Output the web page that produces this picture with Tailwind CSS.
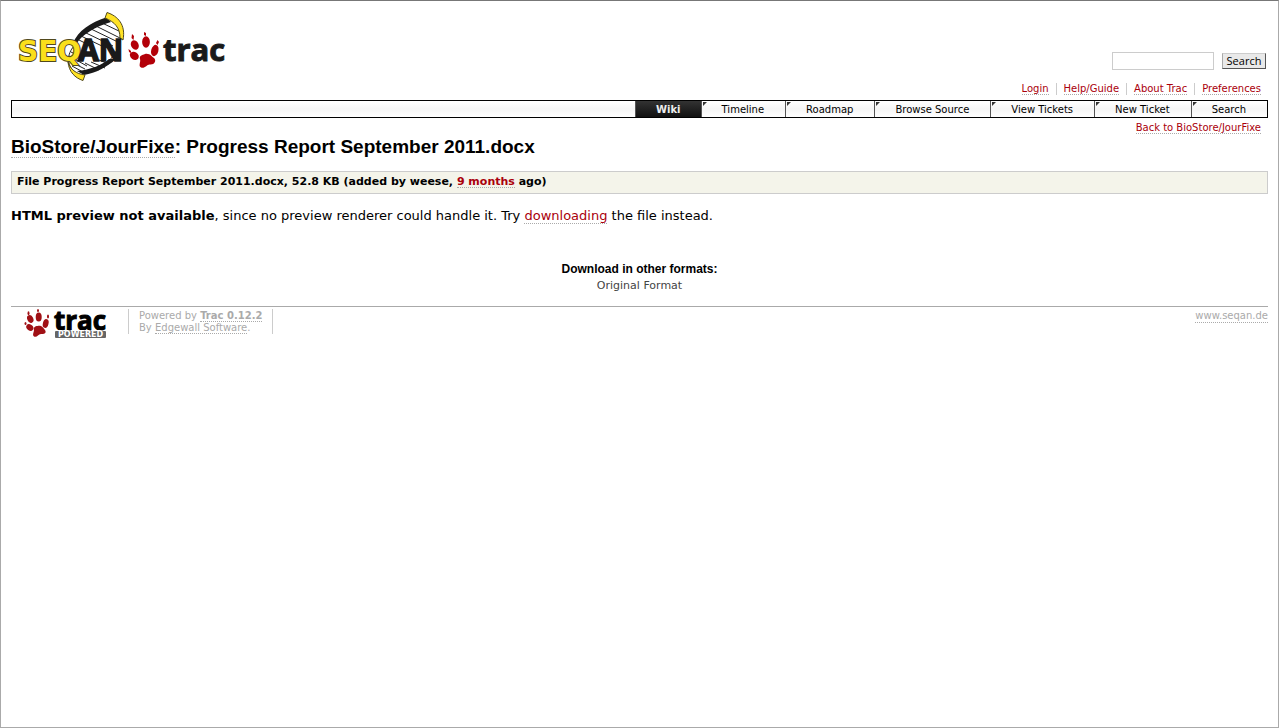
<!DOCTYPE html>
<html lang="en">
<head>
<meta charset="utf-8">
<title>Progress Report September 2011.docx on BioStore/JourFixe – SeqAn</title>
<script src="https://cdn.jsdelivr.net/npm/@tailwindcss/browser@4"></script>
</head>
<body class="flex min-h-screen flex-col border-t border-l border-r border-b border-t-[#777] border-x-[#aaa] border-b-[#aaa] bg-white px-[10px] font-['Verdana','DejaVu_Sans',sans-serif] text-[13px] text-black">
<header>
  <div class="flex h-[69px] items-end justify-between">
    <a href="#" aria-label="SeqAn trac" class="self-start pt-[9px]">
      <svg class="block overflow-visible" width="218" height="76" viewBox="10 10 218 76">
        <path d="M105 18C92 23 78 32 74 44C70 55 69 68 77 75C98 73 118 62 122 41C122 30 116 22 105 18Z" fill="#fff"/>
        <path d="M99 22L120 32M93 25L121 39M88 28L119 43M83 32L112 46M80 36L101 46M78 40L92 47M70 52L78 56M68 56L86 66M68 61L84 69M71 66L82 72M98 60L108 64M90 62L104 68M84 63L98 70" stroke="#222" stroke-width="1" fill="none"/>
        <path d="M73 46C66 54 65 65 74 72M119 30C122 42 115 53 108 61" stroke="#222" stroke-width="1" fill="none"/>
        <path d="M105 17.500C90 22 77 31 72 43L76 43C81 35 93 27 110 22ZM76 71C89 70 101 65 108 59L115 59C106 67 95 73 83 75Z" fill="#1a1a1a"/>
        <path d="M106 12.500C117 16 125 25 122 40L119 38C119 28 114 22 104 18ZM67 62C69 69 75 74 84 75L82 80.500C74 78 68 72 67 62Z" fill="#ffe224" stroke="#51491c" stroke-width="1"/>
        <text x="17" y="61" font-family="DejaVu Sans, sans-serif" font-weight="bold" font-size="28" fill="#fadf1c" stroke="#51491c" stroke-width="2" paint-order="stroke">SEQ</text>
        <text x="77" y="61" font-family="Open Sans, sans-serif" font-weight="bold" font-size="30" fill="#1a1a1a" stroke="#1a1a1a" stroke-width="1.500">AN</text>
        <g fill="#b30008">
          <path d="M144 54C149 53 151 57 153 58C156 61 153 65 149 64.500C146 64 144 69 140 67.500C137 66 140 62 139 59C138 56 141 55 144 54Z"/>
          <ellipse cx="133.800" cy="45" rx="3.800" ry="5" transform="rotate(-25 133.800 45)"/>
          <ellipse cx="145" cy="42" rx="3.900" ry="5.800"/>
          <ellipse cx="153.800" cy="50.500" rx="3.600" ry="5.800" transform="rotate(15 153.800 50.500)"/>
          <ellipse cx="133.300" cy="55.800" rx="4.800" ry="3.800" transform="rotate(35 133.300 55.800)"/>
          <path d="M131 34L133 36L132.500 40L130.500 38ZM143 32L145 33L145 36L143 35ZM156.500 40L158 42L156.500 45L155 43ZM127.500 49L130 51L130 53L128 52Z"/>
        </g>
        <text x="162" y="61" font-family="Open Sans, sans-serif" font-weight="bold" font-size="31" fill="#1a1a1a" stroke="#1a1a1a" stroke-width="1">trac</text>
      </svg>
    </a>
    <form class="mr-[2px] flex items-center gap-2 font-['Lucida_Grande','Open_Sans',sans-serif] text-[11px]" onsubmit="return false">
      <input type="text" aria-label="Search" class="h-[18px] w-[102px] border border-[#ccc] bg-white px-1 outline-none">
      <button class="h-4 w-11 border border-t-[#ccc] border-r-[#555] border-b-[#555] border-l-[#aaa] bg-[#e9e9e9] leading-[14px]">Search</button>
    </form>
  </div>
  <nav class="mt-[13px] flex h-[17px] justify-end text-[10px] leading-[12px] text-[#aa000c]" aria-label="Account">
    <div class="h-3 border-r border-[#ccc] px-[7px]"><a href="#" class="border-b border-dotted border-[#aaa]">Login</a></div>
    <div class="h-3 border-r border-[#ccc] px-[7px]"><a href="#" class="border-b border-dotted border-[#aaa]">Help/Guide</a></div>
    <div class="h-3 border-r border-[#ccc] px-[7px]"><a href="#" class="border-b border-dotted border-[#aaa]">About Trac</a></div>
    <div class="h-3 px-[7px]"><a href="#" class="border-b border-dotted border-[#aaa]">Preferences</a></div>
  </nav>
</header>
<nav class="flex h-[18px] justify-end border border-black bg-linear-to-b from-white via-[#f5f5f5] to-white text-[10px] leading-4" aria-label="Main">
  <a href="#" class="border-l border-[#555] bg-linear-to-b from-[#333] to-[#111] px-5 pt-px font-bold text-[#eee]">Wiki</a>
  <a href="#" class="relative border-l border-[#555] pt-px pr-[21px] pl-5"><svg class="absolute top-0 left-0" width="5" height="5"><path d="M1 1h4l-4 4z" fill="#333"/></svg>Timeline</a>
  <a href="#" class="relative border-l border-[#555] pt-px pr-[21px] pl-5"><svg class="absolute top-0 left-0" width="5" height="5"><path d="M1 1h4l-4 4z" fill="#333"/></svg>Roadmap</a>
  <a href="#" class="relative border-l border-[#555] pt-px pr-[21px] pl-5"><svg class="absolute top-0 left-0" width="5" height="5"><path d="M1 1h4l-4 4z" fill="#333"/></svg>Browse Source</a>
  <a href="#" class="relative border-l border-[#555] pt-px pr-[21px] pl-5"><svg class="absolute top-0 left-0" width="5" height="5"><path d="M1 1h4l-4 4z" fill="#333"/></svg>View Tickets</a>
  <a href="#" class="relative border-l border-[#555] pt-px pr-[21px] pl-5"><svg class="absolute top-0 left-0" width="5" height="5"><path d="M1 1h4l-4 4z" fill="#333"/></svg>New Ticket</a>
  <a href="#" class="relative border-l border-[#555] pt-px pr-[21px] pl-5"><svg class="absolute top-0 left-0" width="5" height="5"><path d="M1 1h4l-4 4z" fill="#333"/></svg>Search</a>
</nav>
<main>
  <div class="mt-1 flex h-3 justify-end px-[7px] text-[10px] leading-[12px] text-[#aa000c]"><a href="#" class="h-3 border-b border-dotted border-[#aaa]">Back to BioStore/JourFixe</a></div>
  <h1 class="h-6 pt-px font-['Arial','Liberation_Sans',sans-serif] text-[19px] leading-6 font-bold"><a href="#" class="inline-block border-b border-dotted border-[#aaa] leading-[21px]">BioStore/JourFixe</a>: Progress Report September 2011.docx</h1>
  <p class="mt-[13px] h-[23px] border border-[#ccc] bg-[#f4f4ea] px-[5px] text-[11px] leading-[19px] font-bold">File Progress Report September 2011.docx, 52.8 KB (added by weese, <a href="#" class="inline-block h-4 border-b border-dotted border-[#aaa] text-[#aa000c]">9 months</a> ago)</p>
  <p class="mt-3 leading-5"><strong>HTML preview not available</strong>, since no preview renderer could handle it. Try <a href="#" class="border-b border-dotted border-[#aaa] text-[#aa000c]">downloading</a> the file instead.</p>
  <section class="mt-[34px] text-center">
    <h2 class="font-['Arial','Liberation_Sans',sans-serif] text-[12px] leading-[18px] font-bold">Download in other formats:</h2>
    <a href="#" class="block text-[11px] leading-[15px] text-[#444]">Original Format</a>
  </section>
</main>
<footer class="mt-[13px] flex items-start border-t border-[#aaa] pt-[2px] text-[10px] leading-3 text-[#aaa]">
  <a href="#" aria-label="Trac Powered" class="ml-[10px]">
    <svg class="block overflow-visible" width="107" height="30" viewBox="21 309 107 30">
      <g fill="#a01015">
        <path d="M37.500 326C42 325 43 328 45 330C47 333 44 334.500 41 334C38 334 37 338 34 336.500C32 335 34 332 34 330C33 328 35 326 37.500 326Z"/>
        <ellipse cx="30.300" cy="319" rx="3" ry="4" transform="rotate(-25 30.300 319)"/>
        <ellipse cx="38.700" cy="317" rx="3" ry="4.600"/>
        <ellipse cx="45.700" cy="323.500" rx="2.800" ry="4.500" transform="rotate(15 45.700 323.500)"/>
        <ellipse cx="29.800" cy="327.500" rx="3.800" ry="2.900" transform="rotate(35 29.800 327.500)"/>
        <ellipse cx="28.500" cy="313.300" rx="1" ry="2"/><ellipse cx="38" cy="310.500" rx="1" ry="1.500"/>
        <ellipse cx="48" cy="316.500" rx="1" ry="2"/><ellipse cx="25.500" cy="323.500" rx="1" ry="1.500"/>
      </g>
      <text x="54" y="330" font-family="Open Sans, sans-serif" font-weight="bold" font-size="26" fill="#000" stroke="#000" stroke-width="1">trac</text>
      <rect x="55" y="331" width="51" height="7" rx="1" fill="#666"/>
      <text x="58" y="337" font-family="DejaVu Sans, sans-serif" font-size="8" font-weight="bold" fill="#fff">POWERED</text>
    </svg>
  </a>
  <p class="mr-auto h-[25px] border-x border-[#ccc] px-[10px] pt-px">Powered by <a href="#" class="border-b border-dotted border-[#aaa] font-bold">Trac 0.12.2</a><br>By <a href="#" class="border-b border-dotted border-[#aaa]">Edgewall Software</a>.</p>
  <a href="#" class="border-b border-dotted border-[#aaa] pt-px">www.seqan.de</a>
</footer>
</body>
</html>
